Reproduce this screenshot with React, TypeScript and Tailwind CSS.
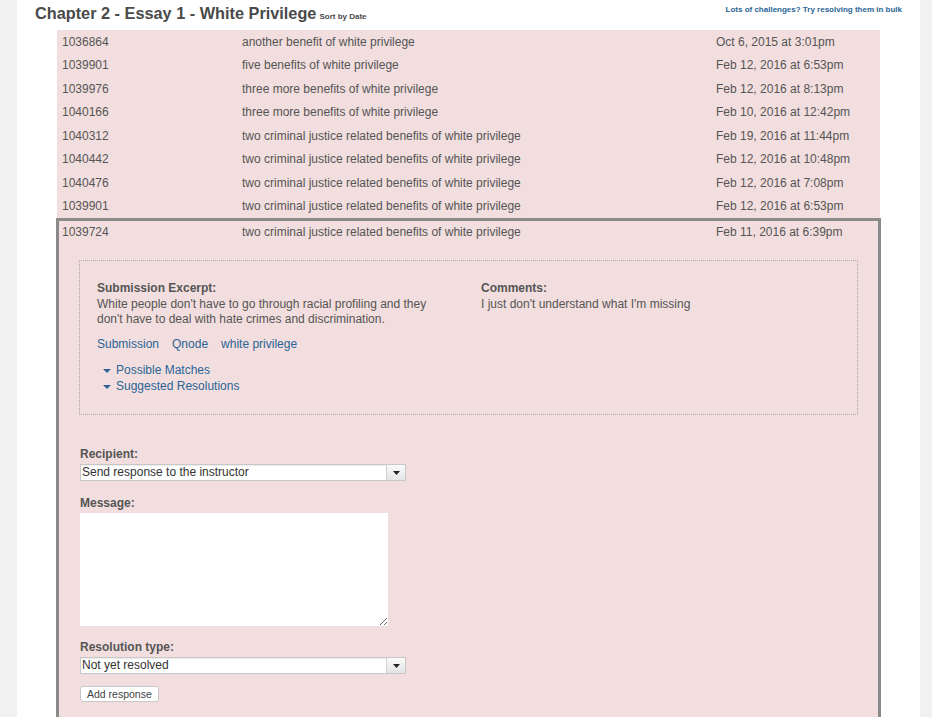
const rows = [
  { id: "1036864", title: "another benefit of white privilege", date: "Oct 6, 2015 at 3:01pm" },
  { id: "1039901", title: "five benefits of white privilege", date: "Feb 12, 2016 at 6:53pm" },
  { id: "1039976", title: "three more benefits of white privilege", date: "Feb 12, 2016 at 8:13pm" },
  { id: "1040166", title: "three more benefits of white privilege", date: "Feb 10, 2016 at 12:42pm" },
  { id: "1040312", title: "two criminal justice related benefits of white privilege", date: "Feb 19, 2016 at 11:44pm" },
  { id: "1040442", title: "two criminal justice related benefits of white privilege", date: "Feb 12, 2016 at 10:48pm" },
  { id: "1040476", title: "two criminal justice related benefits of white privilege", date: "Feb 12, 2016 at 7:08pm" },
  { id: "1039901", title: "two criminal justice related benefits of white privilege", date: "Feb 12, 2016 at 6:53pm" },
];

function Caret() {
  return (
    <svg width="8" height="5" viewBox="0 0 8 5" className="mr-[5px] mt-[2px]">
      <path d="M0 0h8L4 4z" fill="#2a6496" />
    </svg>
  );
}

function FakeSelect({ value }: { value: string }) {
  return (
    <div className="flex w-[326px] h-[17px] bg-white border border-[#c8c8c8] shadow-[inset_0_1px_1px_rgba(0,0,0,0.08)]">
      <div className="flex-1 pl-[1px] text-[12px] leading-[15px] text-[#333]">{value}</div>
      <div className="w-[19px] border-l border-[#d0d0d0] bg-gradient-to-b from-[#fafafa] to-[#e4e4e4] flex items-center justify-center">
        <svg width="7" height="4" viewBox="0 0 7 4">
          <path d="M0 0h7L3.5 4z" fill="#222" />
        </svg>
      </div>
    </div>
  );
}

export default function App() {
  return (
    <div className="min-h-screen bg-[#f1f1f1] pl-[17px] pr-[12px] font-['Liberation_Sans',Arial,sans-serif] text-[#555]">
      <div className="bg-white min-h-[760px]">
        <div className="h-[30px] flex items-start justify-between px-[18px]">
          <div className="flex items-baseline mt-[4px]">
            <h1 className="text-[16.3px] leading-[18px] font-bold text-[#4a4a4a]">
              Chapter 2 - Essay 1 - White Privilege
            </h1>
            <span className="ml-[3px] text-[8px] font-bold text-[#4a4a4a]">Sort by Date</span>
          </div>
          <a className="mt-[5px] text-[8px] leading-[10px] font-bold text-[#2a6496]">
            Lots of challenges? Try resolving them in bulk
          </a>
        </div>

        <div className="mx-[40px] bg-[#f2dede] text-[12px]">
          {rows.map((r, i) => (
            <div key={i} className="grid grid-cols-[180px_474px_1fr] h-[23.5px] items-center pl-[5px]">
              <div>{r.id}</div>
              <div>{r.title}</div>
              <div>{r.date}</div>
            </div>
          ))}

          <div className="-mx-px border-[3px] border-[#8a8a8a] pb-[40px]">
            <div className="grid grid-cols-[180px_474px_1fr] h-[22px] items-center pl-[3px]">
              <div>1039724</div>
              <div>two criminal justice related benefits of white privilege</div>
              <div>Feb 11, 2016 at 6:39pm</div>
            </div>

            <div className="mx-[20px] mt-[17px] border border-dotted border-[#a8a8a8] pt-[20px] pb-[20px] pl-[17px] leading-[15.5px]">
              <div className="flex">
                <div className="w-[384px] pr-[40px]">
                  <div className="font-bold">Submission Excerpt:</div>
                  <div>
                    White people don't have to go through racial profiling and they don't have to deal with hate crimes and discrimination.
                  </div>
                </div>
                <div>
                  <div className="font-bold">Comments:</div>
                  <div>I just don't understand what I'm missing</div>
                </div>
              </div>
              <div className="mt-[9px] flex gap-[13px] text-[#2a6496]">
                <a>Submission</a>
                <a>Qnode</a>
                <a>white privilege</a>
              </div>
              <div className="mt-[10px] pl-[6px] text-[#2a6496] leading-[16px]">
                <div className="flex items-center">
                  <Caret />
                  <a>Possible Matches</a>
                </div>
                <div className="flex items-center">
                  <Caret />
                  <a>Suggested Resolutions</a>
                </div>
              </div>
            </div>

            <div className="ml-[21px] mt-[32px] leading-[15px]">
              <div className="font-bold">Recipient:</div>
              <div className="mt-[2px]">
                <FakeSelect value="Send response to the instructor" />
              </div>
              <div className="font-bold mt-[15px]">Message:</div>
              <textarea className="block mt-[2px] w-[308px] h-[113px] bg-white border-0 outline-none" />
              <div className="font-bold mt-[14px]">Resolution type:</div>
              <div className="mt-[2px]">
                <FakeSelect value="Not yet resolved" />
              </div>
              <button className="mt-[12px] h-[16px] px-[6px] bg-white border border-[#c8c8c8] rounded-[3px] text-[10.5px] leading-[13px] text-[#444]">
                Add response
              </button>
            </div>
          </div>
        </div>
      </div>
    </div>
  );
}
